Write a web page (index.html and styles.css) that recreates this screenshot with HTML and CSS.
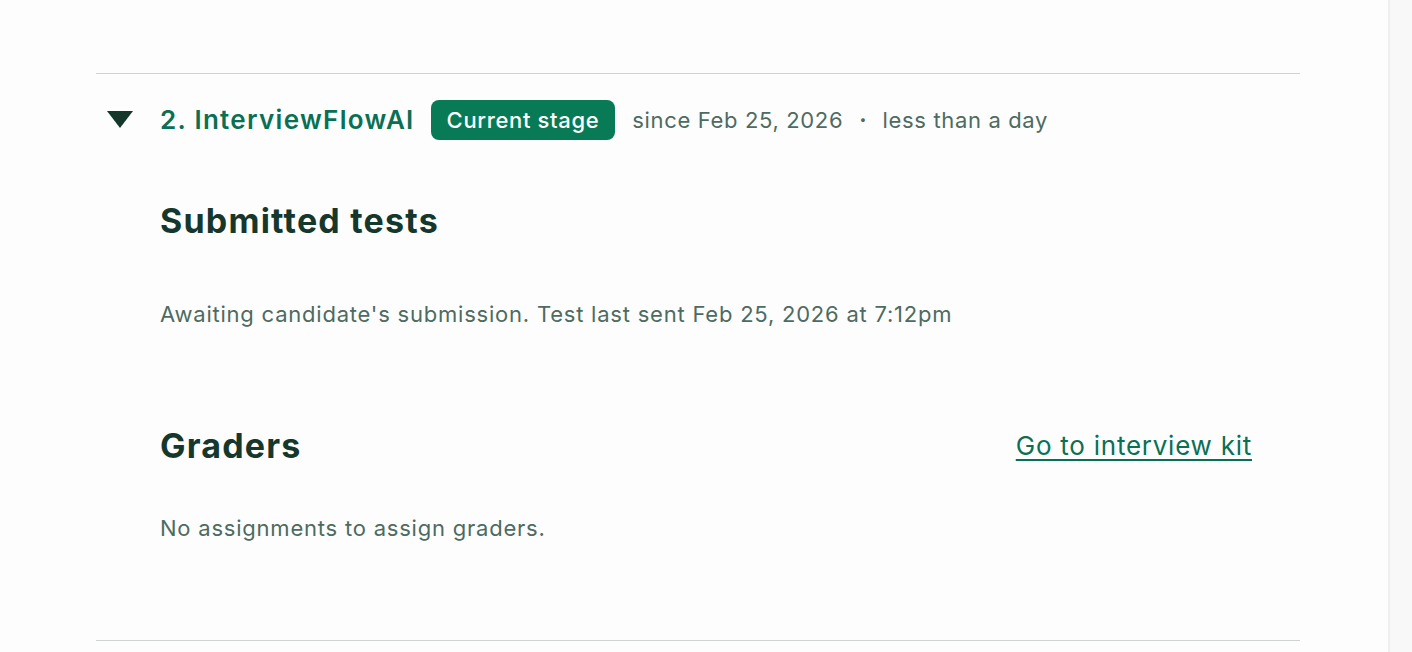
FILE: index.html
```html
<!DOCTYPE html>
<html lang="en">
<head>
<meta charset="utf-8">
<title>InterviewFlowAI stage</title>
<link rel="stylesheet" href="styles.css">
</head>
<body>
<div class="page">
  <main class="main">
    <section class="stage">
      <header class="stage-head">
        <svg class="caret" width="26" height="17" viewBox="0 0 26 17" aria-hidden="true"><path d="M0 0H26L13 17Z" fill="#15372c"/></svg>
        <span class="stage-title">2. InterviewFlowAI</span>
        <span class="badge">Current stage</span>
        <span class="meta">since Feb 25, 2026</span>
        <span class="dot">·</span>
        <span class="meta">less than a day</span>
      </header>
      <div class="stage-body">
        <h2 class="h">Submitted tests</h2>
        <p class="txt first">Awaiting candidate's submission. Test last sent Feb 25, 2026 at 7:12pm</p>
        <div class="row">
          <h2 class="h">Graders</h2>
          <a class="link" href="#">Go to interview kit</a>
        </div>
        <p class="txt last">No assignments to assign graders.</p>
      </div>
    </section>
  </main>
  <aside class="rail"></aside>
</div>
</body>
</html>
```
FILE: styles.css
```css
html, body {
  margin: 0;
  padding: 0;
  height: 100%;
  overflow: hidden;
}
body {
  font-family: Inter, "Noto Sans", sans-serif;
  background: #fdfdfd;
  color: #15372c;
}
.page {
  display: flex;
  height: 652px;
}
.main {
  flex: 1;
  padding: 73px 88px 0 96px;
}
.rail {
  width: 22px;
  background: #f8f8f8;
  border-left: 2px solid #eeeeee;
}
.stage {
  border-top: 1px solid #cfd4d2;
  border-bottom: 1px solid #cfd4d2;
  height: 566px;
}
.stage-head {
  display: flex;
  align-items: center;
  height: 90px;
  padding-left: 11px;
  padding-top: 1px;
  box-sizing: border-box;
}
.caret {
  margin-right: 27px;
}
.stage-title {
  font-size: 26px;
  font-weight: 600;
  color: #0a7055;
  letter-spacing: 1.3px;
  margin-right: 16px;
}
.badge {
  background: #087a56;
  color: #ffffff;
  font-size: 22px;
  font-weight: 500;
  letter-spacing: 0.65px;
  height: 40px;
  line-height: 40px;
  padding: 0 16px;
  border-radius: 8px;
  margin-right: 17px;
}
.meta {
  font-size: 22px;
  letter-spacing: 0.65px;
  color: #4d6b61;
}
.dot {
  font-size: 22px;
  color: #4d6b61;
  margin: 0 16px;
  font-weight: 700;
}
.stage-body {
  padding: 0 48px 0 64px;
}
.h {
  margin: 0;
  font-size: 34px;
  font-weight: 700;
  letter-spacing: 1.2px;
  color: #15372c;
  line-height: 40px;
}
.stage-body > .h {
  margin-top: 37px;
}
.txt {
  margin: 0;
  font-size: 22px;
  letter-spacing: 0.78px;
  color: #4d6b61;
  line-height: 28px;
}
.txt.first {
  margin-top: 59px;
}
.row {
  display: flex;
  justify-content: space-between;
  align-items: center;
  margin-top: 98px;
}
.txt.last {
  margin-top: 48px;
}
.link {
  font-size: 26px;
  line-height: 34px;
  letter-spacing: 0.75px;
  color: #0a7055;
  text-decoration: underline;
  text-underline-offset: 4px;
  text-decoration-thickness: 2px;
}
```
